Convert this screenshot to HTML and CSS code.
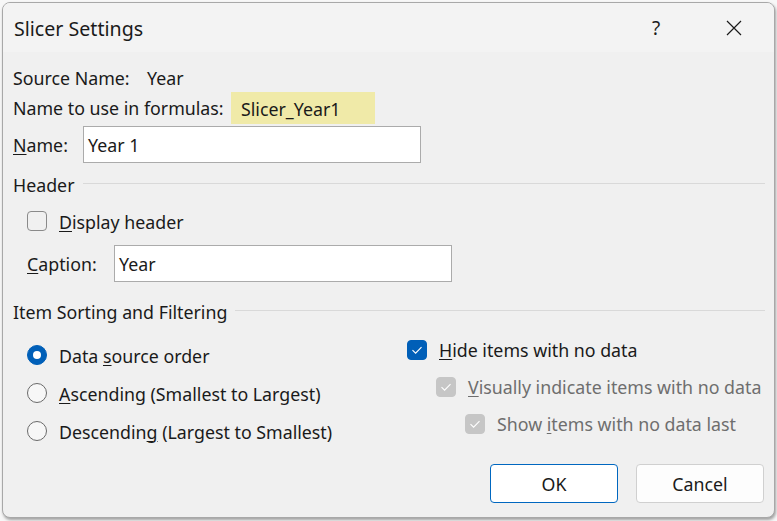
FILE: index.html
```html
<!DOCTYPE html>
<html>
<head>
<meta charset="utf-8">
<link rel="stylesheet" href="styles.css">
</head>
<body>
<div class="dialog">
  <div class="titlebar">
    <div class="title">Slicer Settings</div>
    <div class="help">?</div>
    <div class="close">
      <svg width="16" height="16" viewBox="0 0 16 16"><path d="M1 1 L15 15 M15 1 L1 15" stroke="#1a1a1a" stroke-width="1.2" fill="none"/></svg>
    </div>
  </div>
  <div class="content">
    <div class="row r-source">
      <span class="lbl w-source">Source Name:</span>
      <span>Year</span>
    </div>
    <div class="row r-formula">
      <span class="lbl w-formula">Name to use in formulas:</span>
      <span class="hl">Slicer_Year1</span>
    </div>
    <div class="row r-input">
      <span class="lbl w-name"><u>N</u>ame:</span>
      <div class="input">Year 1</div>
    </div>
    <div class="section r-header">
      <span class="sec-title">Header</span>
      <span class="sec-line"></span>
    </div>
    <div class="row r-check indent">
      <span class="cb"></span>
      <span class="cb-label"><u>D</u>isplay header</span>
    </div>
    <div class="row r-input r-caption indent">
      <span class="lbl w-caption"><u>C</u>aption:</span>
      <div class="input">Year</div>
    </div>
    <div class="section r-sort">
      <span class="sec-title">Item Sorting and Filtering</span>
      <span class="sec-line"></span>
    </div>
    <div class="cols">
      <div class="col-left">
        <div class="opt">
          <span class="radio on"></span>
          <span class="cb-label">Data <u>s</u>ource order</span>
        </div>
        <div class="opt">
          <span class="radio"></span>
          <span class="cb-label"><u>A</u>scending (Smallest to Largest)</span>
        </div>
        <div class="opt">
          <span class="radio"></span>
          <span class="cb-label">Descendin<u>g</u> (Largest to Smallest)</span>
        </div>
      </div>
      <div class="col-right">
        <div class="opt2">
          <span class="cb on">
            <svg width="20" height="20" viewBox="0 0 20 20"><path d="M5.5 10.2 L8.6 13.2 L14.5 7.2" stroke="#fff" stroke-width="1.1" fill="none"/></svg>
          </span>
          <span class="cb-label"><u>H</u>ide items with no data</span>
        </div>
        <div class="opt2 lvl1 disabled">
          <span class="cb dis">
            <svg width="20" height="20" viewBox="0 0 20 20"><path d="M5.5 10.2 L8.6 13.2 L14.5 7.2" stroke="#fff" stroke-width="1.1" fill="none"/></svg>
          </span>
          <span class="cb-label"><u>V</u>isually indicate items with no data</span>
        </div>
        <div class="opt2 lvl2 disabled">
          <span class="cb dis">
            <svg width="20" height="20" viewBox="0 0 20 20"><path d="M5.5 10.2 L8.6 13.2 L14.5 7.2" stroke="#fff" stroke-width="1.1" fill="none"/></svg>
          </span>
          <span class="cb-label">Show <u>i</u>tems with no data last</span>
        </div>
      </div>
    </div>
    <div class="footer">
      <button class="btn primary">OK</button>
      <button class="btn">Cancel</button>
    </div>
  </div>
</div>
</body>
</html>
```
FILE: styles.css
```css
* { box-sizing: border-box; }
html, body { margin: 0; padding: 0; }
body {
  width: 777px;
  height: 521px;
  background: #f7f7f7;
  font-family: "Noto Sans", "Open Sans", sans-serif;
  font-size: 17.8px;
  color: #1a1a1a;
  overflow: hidden;
  padding: 2px 2px 3px 2px;
}
.dialog {
  width: 773px;
  height: 516px;
  background: #f0f0f0;
  border: 1px solid #a8a8a8;
  border-radius: 8px;
  box-shadow: 1px 2px 3px rgba(0,0,0,0.35);
  overflow: hidden;
  display: flex;
  flex-direction: column;
}
.titlebar {
  height: 49px;
  background: #f3f3f3;
  display: flex;
  align-items: center;
  padding-left: 11px;
  flex: none;
}
.title {
  font-size: 19.6px;
  flex: 1;
  padding-top: 1px;
}
.help {
  width: 80px;
  text-align: center;
  font-size: 19px;
  margin-right: 2px;
  padding-left: 12px;
}
.close {
  width: 80px;
  display: flex;
  justify-content: center;
  padding-left: 4px;
  margin-right: 2px;
}
.close svg { display: block; }
.content {
  flex: 1;
  padding: 10px 9px 0 10px;
  display: flex;
  flex-direction: column;
}
.row {
  display: flex;
  align-items: center;
}
.r-source { height: 30px; padding-top: 1px; }
.r-formula { height: 32px; }
.r-input { height: 37px; margin-top: 2px; }
.lbl { flex: none; }
.w-source { width: 134px; }
.w-formula { width: 218px; }
.w-name { width: 70px; }
.w-caption { width: 87px; }
.hl {
  background: #f0eaa8;
  height: 32px;
  line-height: 32px;
  width: 144px;
  padding: 1px 0 0 10px;
}
.input {
  width: 338px;
  height: 37px;
  background: #fff;
  border: 1px solid #ababab;
  padding-left: 4px;
  padding-top: 1px;
  display: flex;
  align-items: center;
}
.section {
  display: flex;
  align-items: center;
}
.r-header { height: 42px; padding-top: 1px; }
.r-sort { height: 38px; margin-top: 10px; padding-top: 1px; }
.sec-title { flex: none; }
.sec-line {
  flex: 1;
  height: 1px;
  background: #d9d9d9;
  margin-left: 8px;
  margin-top: -2px;
}
.indent { padding-left: 14px; }
.r-check { height: 32px; }
.r-caption { margin-top: 8px; }
.cb-label { padding-top: 1px; }
.cb {
  width: 20px;
  height: 20px;
  border: 1px solid #8a8a8a;
  border-radius: 4px;
  flex: none;
  margin-right: 12px;
  display: flex;
}
.cb svg { display: block; margin: -1px; }
.cb.on { background: #005fb8; border-color: #005fb8; }
.cb.dis { background: #c6c6c6; border-color: #c6c6c6; }
.cols {
  display: flex;
}
.col-left {
  width: 394px;
  padding-top: 6px;
  padding-left: 14px;
}
.col-right {
  flex: 1;
  padding-top: 1px;
}
.opt {
  height: 38px;
  display: flex;
  align-items: center;
}
.opt2 {
  height: 37px;
  display: flex;
  align-items: center;
}
.lvl1 { padding-left: 29px; }
.lvl2 { padding-left: 58px; }
.disabled { color: #6e6e6e; }
.radio {
  width: 20px;
  height: 20px;
  border-radius: 50%;
  border: 1px solid #6a6a6a;
  flex: none;
  margin-right: 12px;
  background: #f7f7f7;
  position: relative;
}
.radio.on {
  background: #005fb8;
  border-color: #005fb8;
}
.radio.on::after {
  content: "";
  position: absolute;
  left: 5px;
  top: 5px;
  width: 8px;
  height: 8px;
  border-radius: 50%;
  background: #fff;
}
.footer {
  display: flex;
  justify-content: flex-end;
  gap: 18px;
  margin-top: auto;
  margin-bottom: 14px;
  margin-right: 1px;
}
.btn {
  width: 128px;
  height: 39px;
  background: #fdfdfd;
  border: 1px solid #d0d0d0;
  border-radius: 4px;
  font-family: inherit;
  font-size: 17.8px;
  color: #1a1a1a;
  padding: 0;
}
.btn.primary {
  border-color: #0067c0;
  background: #fff;
}
u { text-underline-offset: 2px; text-decoration-thickness: 1px; }
```
